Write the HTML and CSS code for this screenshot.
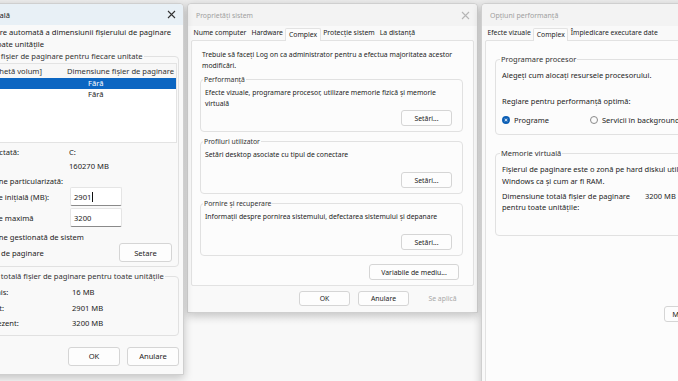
FILE: index.html
```html
<!DOCTYPE html>
<html lang="ro">
<head>
    <meta charset="UTF-8">
    <title>Memorie virtuală</title>
    <link rel="stylesheet" href="styles.css">
</head>
<body>

<div class="desktop">

    <!-- Memorie virtuala (active) -->
    <section class="window vm">
        <header class="titlebar">
            <span class="title">Memorie virtuală</span>
            <svg class="close" width="9" height="9" viewBox="0 0 9 9"><path d="M1 1L8 8M8 1L1 8" /></svg>
        </header>
        <div class="vm-body">
            <div class="check">
                <span class="box"></span>
                <span>Gestionare automată a dimensiunii fișierului de paginare<br>pentru toate unitățile</span>
            </div>

            <fieldset class="group vm-group">
                <legend>Dimensiune fișier de paginare pentru fiecare unitate</legend>
                <div class="list">
                    <div class="list-row list-head"><span>Unitate [Etichetă volum]</span><span>Dimensiune fișier de paginare</span></div>
                    <div class="list-row selected"><span>C:</span><span class="size">Fără</span></div>
                    <div class="list-row"><span>D: [Date]</span><span class="size">Fără</span></div>
                </div>
                <div class="info">
                    <span>Unitate selectată:</span><span>C:</span>
                    <span>Spațiu liber:</span><span>160270 MB</span>
                </div>
                <div class="opt opt-custom"><span class="radio on"></span>Dimensiune particularizată:</div>
                <div class="size-row">
                    <span>Dimensiune inițială (MB):</span>
                    <span class="field">2901<span class="caret"></span></span>
                </div>
                <div class="size-row">
                    <span>Dimensiune maximă</span>
                    <span class="field">3200</span>
                </div>
                <div class="opt opt-system"><span class="radio"></span>Dimensiune gestionată de sistem</div>
                <div class="opt opt-none">
                    <span class="opt-label"><span class="radio"></span>Fără fișier de paginare</span>
                    <button class="btn btn-set">Setare</button>
                </div>
            </fieldset>

            <fieldset class="group vm-total">
                <legend>Dimensiune totală fișier de paginare pentru toate unitățile</legend>
                <div class="totals">
                    <span>Minim permis:</span><span>16 MB</span>
                    <span>Recomandat:</span><span>2901 MB</span>
                    <span>Alocat în prezent:</span><span>3200 MB</span>
                </div>
            </fieldset>

            <div class="actions vm-actions">
                <button class="btn">OK</button>
                <button class="btn">Anulare</button>
            </div>
        </div>
    </section>

    <!-- Proprietati sistem -->
    <section class="window sys inactive">
        <header class="titlebar">
            <span class="title">Proprietăți sistem</span>
            <svg class="close" width="9" height="9" viewBox="0 0 9 9"><path d="M1 1L8 8M8 1L1 8" /></svg>
        </header>
        <nav class="tabs">
            <span class="tab">Nume computer</span>
            <span class="tab">Hardware</span>
            <span class="tab active">Complex</span>
            <span class="tab">Protecție sistem</span>
            <span class="tab">La distanță</span>
        </nav>
        <div class="page sys-page">
            <p class="intro">Trebuie să faceți Log on ca administrator pentru a efectua majoritatea acestor<br>modificări.</p>

            <fieldset class="group sys-group">
                <legend>Performanță</legend>
                <p class="desc">Efecte vizuale, programare procesor, utilizare memorie fizică și memorie<br>virtuală</p>
                <button class="btn">Setări...</button>
            </fieldset>

            <fieldset class="group sys-group">
                <legend>Profiluri utilizator</legend>
                <p class="desc">Setări desktop asociate cu tipul de conectare</p>
                <button class="btn">Setări...</button>
            </fieldset>

            <fieldset class="group sys-group">
                <legend>Pornire și recuperare</legend>
                <p class="desc">Informații despre pornirea sistemului, defectarea sistemului și depanare</p>
                <button class="btn">Setări...</button>
            </fieldset>

            <button class="btn btn-env">Variabile de mediu...</button>
        </div>
        <div class="actions sys-actions">
            <button class="btn">OK</button>
            <button class="btn">Anulare</button>
            <button class="btn disabled">Se aplică</button>
        </div>
    </section>

    <!-- Optiuni performanta -->
    <section class="window perf inactive">
        <header class="titlebar">
            <span class="title">Opțiuni performanță</span>
        </header>
        <nav class="tabs">
            <span class="tab">Efecte vizuale</span>
            <span class="tab active">Complex</span>
            <span class="tab">Împiedicare executare date</span>
        </nav>
        <div class="page perf-page">
            <fieldset class="group perf-cpu">
                <legend>Programare procesor</legend>
                <p class="line">Alegeți cum alocați resursele procesorului.</p>
                <p class="line tune">Reglare pentru performanță optimă:</p>
                <div class="radios">
                    <span class="opt"><span class="radio on"></span>Programe</span>
                    <span class="opt"><span class="radio"></span>Servicii în background</span>
                </div>
            </fieldset>

            <fieldset class="group perf-mem">
                <legend>Memorie virtuală</legend>
                <p class="line">Fișierul de paginare este o zonă pe hard diskul utilizată de<br>Windows ca și cum ar fi RAM.</p>
                <div class="mem-total">
                    <span>Dimensiune totală fișier de paginare<br>pentru toate unitățile:</span>
                    <span>3200 MB</span>
                </div>
            </fieldset>

            <button class="btn btn-change">Modificare...</button>
        </div>
    </section>

</div>

</body>
</html>
```

FILE: styles.css
```css
/* General */
* {
    box-sizing: border-box;
}

body {
    margin: 0;
    background: #f6f6f6;
    font-family: 'Noto Sans', sans-serif;
    color: #1c1c1c;
}

p {
    margin: 0;
}

.desktop {
    position: relative;
    width: 678px;
    height: 381px;
    overflow: hidden;
    background: linear-gradient(#ededed, #f8f8f8 85%);
}

/* Windows */
.window {
    position: absolute;
    top: 3px;
    display: flex;
    flex-direction: column;
    background: #f9f9f9;
    border: 1px solid #cfcfcf;
    border-radius: 4px 4px 0 0;
    box-shadow: 0 3px 10px rgba(0,0,0,0.22);
}

.vm {
    left: -56px;
    width: 240px;
    height: 372px;
    font-size: 7.6px;
    z-index: 2;
}

.sys {
    left: 187px;
    width: 291px;
    height: 310px;
    font-size: 6.85px;
}

.perf {
    left: 481px;
    width: 320px;
    height: 400px;
    font-size: 7.5px;
}

.titlebar {
    height: 22px;
    flex: none;
    display: flex;
    align-items: center;
    justify-content: space-between;
    padding: 0 7px 0 8px;
    background: #f3f3f3;
    border-radius: 4px 4px 0 0;
}

.vm .titlebar {
    height: 21px;
    padding-left: 4px;
    background: #e8f0f6;
}

.perf .titlebar {
    font-size: 7px;
}

.close path {
    stroke: #333;
    stroke-width: 1.1;
}

.inactive .title {
    color: #a0a0a0;
}

.inactive .close path {
    stroke: #b5b5b5;
}

/* Buttons */
.btn {
    height: 16px;
    min-width: 51px;
    padding: 0 6px;
    font: inherit;
    color: #1c1c1c;
    background: #fdfdfd;
    border: 1px solid #d5d5d5;
    border-radius: 3px;
}

.btn.disabled {
    color: #a8a8a8;
    background: transparent;
    border-color: transparent;
}

.actions {
    display: flex;
    justify-content: flex-end;
}

/* Group boxes */
.group {
    margin: 0;
    border: 1px solid #e1e1e1;
    border-radius: 4px;
    min-width: 0;
}

.group legend {
    padding: 0 1px;
    margin-left: -2px;
    line-height: 11px;
    color: #333;
}

/* Radios and checkbox */
.radio {
    display: inline-block;
    width: 8px;
    height: 8px;
    margin-right: 4px;
    border: 1px solid #8a8a8a;
    border-radius: 50%;
    background: #fbfbfb;
    vertical-align: -1px;
}

.radio.on {
    border: 2px solid #0c5fb5;
    background: #fff;
    box-shadow: inset 0 0 0 1px #0c5fb5;
}

/* Memorie virtuala */
.vm-body {
    flex: 1;
    display: flex;
    flex-direction: column;
    padding: 1px 4px 0 5px;
}

.check {
    display: flex;
    gap: 4px;
    line-height: 12px;
    padding-left: 5px;
}

.check .box {
    width: 9px;
    height: 9px;
    margin-top: 2px;
    border: 1px solid #8a8a8a;
    border-radius: 2px;
}

.vm-group {
    margin-top: 1px;
    padding: 1px 6px 4px 2px;
}

.vm-group legend {
    margin-left: 2px;
}

.list {
    height: 80px;
    margin-right: -5px;
    background: #fff;
    border: 1px solid #e3e3e3;
}

.list-row {
    display: grid;
    grid-template-columns: 111px 1fr;
    height: 11px;
    line-height: 11px;
    padding-left: 2px;
    white-space: nowrap;
}

.list-head {
    height: 14px;
    line-height: 14px;
    background: #f7f7f7;
    color: #333;
}

.list-row .size {
    padding-left: 21px;
}

.list-row.selected {
    background: #0c66c2;
    color: #fff;
}

.info {
    display: grid;
    grid-template-columns: 112px 1fr;
    line-height: 14px;
    margin-top: 2px;
    padding-left: 4px;
}

.opt-custom {
    line-height: 11px;
    margin-top: 3px;
}

.size-row {
    display: grid;
    grid-template-columns: 110px 52px;
    align-items: center;
    height: 19px;
    margin-bottom: 2px;
    padding-left: 7px;
}

.field {
    height: 19px;
    line-height: 18px;
    padding-left: 3px;
    background: #fff;
    border: 1px solid #e5e5e5;
    border-bottom-color: #8a8a8a;
    border-radius: 2px;
}

.caret {
    display: inline-block;
    width: 1px;
    height: 10px;
    margin-left: 1px;
    background: #111;
    vertical-align: -2px;
}

.opt-system {
    line-height: 12px;
    margin-top: 4px;
}

.opt-none {
    display: flex;
    align-items: center;
    justify-content: space-between;
    height: 19px;
}

.opt-label {
    margin-left: -1px;
}

.btn-set {
    height: 19px;
    width: 53px;
}

.vm-total {
    margin-top: 4px;
    padding: 3px 6px 3px 6px;
}

.totals {
    display: grid;
    grid-template-columns: 115px 1fr;
    line-height: 15.5px;
}

.vm-actions {
    gap: 7px;
    margin-top: 11px;
}

.vm-actions .btn {
    height: 19px;
    width: 52px;
}

/* Tabs */
.tabs {
    display: flex;
    height: 13px;
    flex: none;
    padding-left: 3px;
    margin-top: 1px;
    line-height: 12px;
}

.perf .tabs {
    font-size: 6.8px;
}

.tab {
    padding: 0 2.5px;
    white-space: nowrap;
}

.tab.active {
    background: #fcfcfc;
    border: 1px solid #e2e2e2;
    border-bottom: none;
    border-radius: 2px 2px 0 0;
    position: relative;
    top: 1px;
}

.page {
    flex: 1;
    margin: 0 3px;
    background: #fcfcfc;
    border: 1px solid #e2e2e2;
    border-radius: 2px;
}

/* Proprietati sistem */
.sys-page {
    display: flex;
    flex-direction: column;
    padding: 8px 10px 0 8px;
}

.intro {
    line-height: 11px;
    padding-left: 2px;
}

.sys-group {
    display: flex;
    flex-direction: column;
    align-items: flex-end;
    margin-top: 4px;
    padding: 2px 10px 5px 4px;
}

.sys-group:first-of-type {
    margin-top: 3px;
}

.sys-group .desc {
    align-self: stretch;
    min-height: 23px;
    line-height: 11px;
}

.btn-env {
    align-self: flex-end;
    margin: 8px 4px 0 0;
    width: 90px;
}

.sys-actions {
    height: 26px;
    flex: none;
    gap: 8px;
    padding: 5px 9px 0 0;
}

.sys-actions .btn {
    height: 15px;
}

/* Optiuni performanta */
.perf-page {
    padding: 13px 0 0 9px;
}

.perf-cpu {
    padding: 5px 0 8px 6px;
}

.line {
    line-height: 11px;
    white-space: nowrap;
}

.perf-mem .line {
    line-height: 12px;
}

.tune {
    margin-top: 15px;
}

.radios {
    display: flex;
    margin-top: 8px;
    line-height: 11px;
}

.radios .opt:first-child {
    width: 88px;
}

.perf-mem {
    margin-top: 13px;
    padding: 4px 0 22px 6px;
}

.mem-total {
    display: grid;
    grid-template-columns: 143px 1fr;
    margin-top: 4px;
    line-height: 11px;
}

.btn-change {
    display: block;
    margin: 70px 0 0 169px;
    width: 60px;
}
```
